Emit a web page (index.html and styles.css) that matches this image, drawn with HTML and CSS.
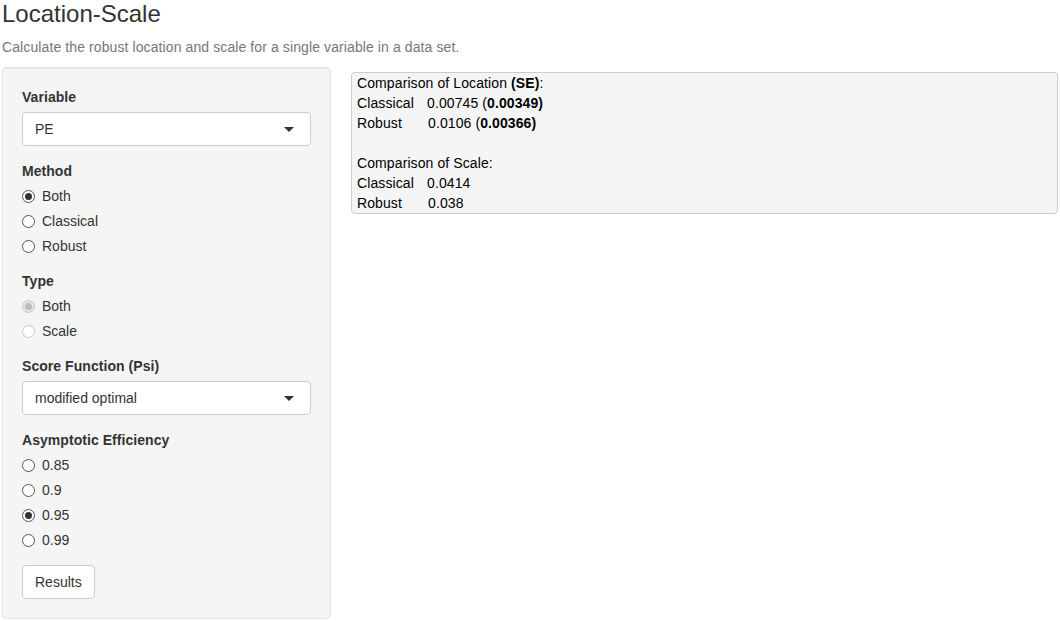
FILE: index.html
```html
<!DOCTYPE html>
<html lang="en">
<head>
<meta charset="utf-8">
<title>Location-Scale</title>
<link rel="stylesheet" href="styles.css">
</head>
<body>
<div class="page">
  <h2 class="title">Location-Scale</h2>
  <p class="subtitle">Calculate the robust location and scale for a single variable in a data set.</p>
  <div class="layout">
    <div class="well">
      <div class="form-group">
        <label class="control-label">Variable</label>
        <div class="select"><span>PE</span><span class="caret"></span></div>
      </div>
      <div class="form-group">
        <label class="control-label">Method</label>
        <div class="options">
          <label class="radio"><input type="radio" name="method" checked><span>Both</span></label>
          <label class="radio"><input type="radio" name="method"><span>Classical</span></label>
          <label class="radio"><input type="radio" name="method"><span>Robust</span></label>
        </div>
      </div>
      <div class="form-group">
        <label class="control-label">Type</label>
        <div class="options">
          <label class="radio"><input type="radio" name="type" checked disabled><span>Both</span></label>
          <label class="radio"><input type="radio" name="type" disabled><span>Scale</span></label>
        </div>
      </div>
      <div class="form-group">
        <label class="control-label">Score Function (Psi)</label>
        <div class="select"><span>modified optimal</span><span class="caret"></span></div>
      </div>
      <div class="form-group">
        <label class="control-label">Asymptotic Efficiency</label>
        <div class="options">
          <label class="radio"><input type="radio" name="eff"><span>0.85</span></label>
          <label class="radio"><input type="radio" name="eff"><span>0.9</span></label>
          <label class="radio"><input type="radio" name="eff" checked><span>0.95</span></label>
          <label class="radio"><input type="radio" name="eff"><span>0.99</span></label>
        </div>
      </div>
      <button class="btn" type="button">Results</button>
    </div>
    <div class="main">
      <div class="output">
        <div>Comparison of Location <b>(SE)</b>:</div>
        <div class="row"><span class="lab">Classical</span><span>0.00745 (<b>0.00349)</b></span></div>
        <div class="row"><span class="lab lab-r">Robust</span><span>0.0106 (<b>0.00366)</b></span></div>
        <div class="blank"></div>
        <div>Comparison of Scale:</div>
        <div class="row"><span class="lab">Classical</span><span>0.0414</span></div>
        <div class="row"><span class="lab lab-r">Robust</span><span>0.038</span></div>
      </div>
    </div>
  </div>
</div>
</body>
</html>
```
FILE: styles.css
```css
* { box-sizing: border-box; }
html, body {
  margin: 0;
  padding: 0;
  background: #fff;
}
body {
  font-family: "Liberation Sans", Arial, Helvetica, sans-serif;
  font-size: 14px;
  line-height: 20px;
  color: #333;
}
.page {
  padding: 0 2px;
}
.title {
  margin: 0 0 10px 0;
  font-size: 24px;
  font-weight: normal;
  line-height: 1.1;
  padding-top: 1px;
  color: #333;
}
.subtitle {
  margin: 0 0 10px 0;
  color: #777;
  letter-spacing: 0.1px;
}
.layout {
  display: grid;
  grid-template-columns: 329px 1fr;
  column-gap: 20px;
  align-items: start;
}
.well {
  background: #f5f5f5;
  border: 1px solid #e3e3e3;
  border-radius: 4px;
  padding: 19px 19px 19px 19px;
  box-shadow: inset 0 1px 1px rgba(0,0,0,0.05);
}
.form-group {
  margin-bottom: 15px;
  display: flex;
  flex-direction: column;
}
.control-label {
  font-weight: bold;
  margin-bottom: 5px;
  display: block;
  letter-spacing: 0.05px;
}
.select {
  height: 34px;
  background: #fff;
  border: 1px solid #ccc;
  border-radius: 4px;
  padding: 6px 12px;
  display: flex;
  align-items: center;
  justify-content: space-between;
  color: #333;
}
.caret {
  width: 0;
  height: 0;
  border-style: solid;
  border-width: 5px 5px 0 5px;
  border-color: #333 transparent transparent transparent;
  margin-right: 4px;
}
.options {
  display: flex;
  flex-direction: column;
  gap: 5px;
}
.radio {
  display: flex;
  align-items: center;
  height: 20px;
  font-weight: normal;
}
.radio input {
  appearance: none;
  -webkit-appearance: none;
  width: 13px;
  height: 13px;
  margin: 0 7px 0 0;
  border: 1px solid #555;
  border-radius: 50%;
  background: #fff;
  position: relative;
  flex: none;
}
.radio input:checked::after {
  content: "";
  position: absolute;
  left: 2px;
  top: 2px;
  width: 7px;
  height: 7px;
  border-radius: 50%;
  background: #333;
}
.radio input:disabled {
  border-color: #c6c6c6;
  background: #fff;
}
.radio input:disabled:checked {
  background: #e6e6e6;
}
.radio input:disabled:checked::after {
  background: #bdbdbd;
}
.btn {
  font-family: inherit;
  font-size: 14px;
  line-height: 20px;
  color: #333;
  background: #fff;
  border: 1px solid #ccc;
  border-radius: 4px;
  padding: 6px 12px;
  height: 34px;
  margin: 0;
  align-self: flex-start;
}
.main {
  padding-top: 5px;
}
.output {
  background: #f5f5f5;
  border: 1px solid #ccc;
  border-radius: 4px;
  padding: 0 5px;
  color: #000;
  letter-spacing: 0.1px;
}
.row {
  display: flex;
}
.lab {
  width: 70px;
}
.lab-r {
  width: 71px;
}
.blank {
  height: 20px;
}
```
